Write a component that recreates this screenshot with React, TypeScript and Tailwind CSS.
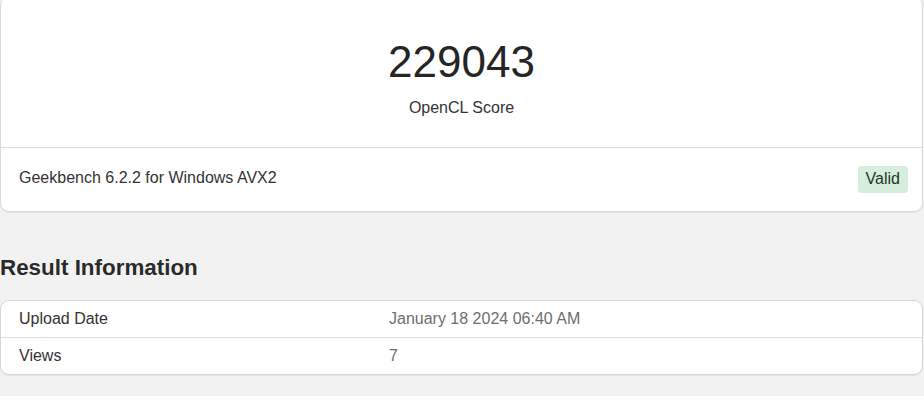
export default function App() {
  const rows = [
    { label: 'Upload Date', value: 'January 18 2024 06:40 AM' },
    { label: 'Views', value: '7' },
  ];

  return (
    <div className="min-h-[400px] bg-[#f2f2f2] pr-px font-['Liberation_Sans',Arial,sans-serif] text-[#333]">
      {/* score card */}
      <div className="-mt-[4px] rounded-[9px] border border-[#dadada] bg-white shadow-[0_1px_1px_rgba(0,0,0,0.06)]">
        <div className="flex flex-col items-center pt-[39px] pb-[27px]">
          <div className="text-[44px] leading-[1.2] text-[#252525]">229043</div>
          <div className="mt-[7px] text-base leading-6 text-[#333]">OpenCL Score</div>
        </div>
        <div className="flex items-start justify-between border-t border-[#dcdcdc] py-[18px] pl-[18px] pr-[14px]">
          <div className="text-base leading-6">Geekbench 6.2.2 for Windows AVX2</div>
          <span className="rounded-[4px] bg-[#d6eedb] px-2 pt-px pb-[2px] text-base leading-6 text-[#253528]">
            Valid
          </span>
        </div>
      </div>

      <h2 className="mt-[43px] text-[22.4px] font-bold leading-[1.2] text-[#2a2a2a]">Result Information</h2>

      <div className="mt-[18px] overflow-hidden rounded-[9px] border border-[#d6d6d6] bg-white shadow-[0_1px_1px_rgba(0,0,0,0.06)]">
        {rows.map((row, i) => (
          <div
            key={row.label}
            className={`grid grid-cols-[370px_1fr] ${i > 0 ? 'border-t border-[#dedede]' : ''}`}
          >
            <div className="py-1.5 pl-[18px] text-base leading-6 text-[#333]">{row.label}</div>
            <div className="py-1.5 pl-[18px] text-base leading-6 text-[#6e6e6e]">{row.value}</div>
          </div>
        ))}
      </div>
    </div>
  );
}
